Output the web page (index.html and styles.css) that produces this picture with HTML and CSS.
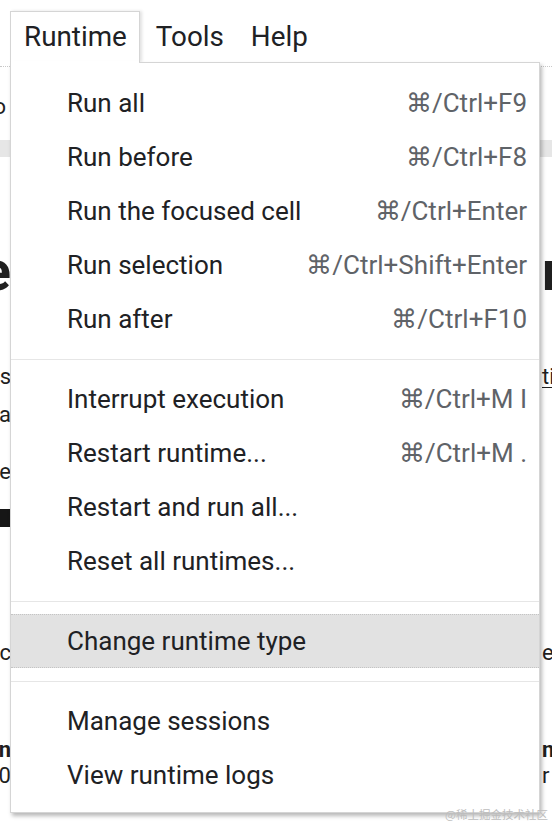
FILE: index.html
```html
<!DOCTYPE html>
<html lang="en">
<head>
<meta charset="utf-8">
<title>Runtime menu</title>
<link rel="stylesheet" href="styles.css">
</head>
<body>
<div class="screen">
  <header class="menubar">
    <div class="menu-item active">Runtime
      <div class="dropdown">
        <div class="entry"><span class="label">Run all</span><span class="key">⌘/Ctrl+F9</span></div>
        <div class="entry"><span class="label">Run before</span><span class="key">⌘/Ctrl+F8</span></div>
        <div class="entry"><span class="label">Run the focused cell</span><span class="key">⌘/Ctrl+Enter</span></div>
        <div class="entry"><span class="label">Run selection</span><span class="key">⌘/Ctrl+Shift+Enter</span></div>
        <div class="entry"><span class="label">Run after</span><span class="key">⌘/Ctrl+F10</span></div>
        <div class="sep"></div>
        <div class="entry"><span class="label">Interrupt execution</span><span class="key">⌘/Ctrl+M I</span></div>
        <div class="entry"><span class="label">Restart runtime...</span><span class="key">⌘/Ctrl+M .</span></div>
        <div class="entry"><span class="label">Restart and run all...</span></div>
        <div class="entry"><span class="label">Reset all runtimes...</span></div>
        <div class="sep"></div>
        <div class="entry hover"><span class="label">Change runtime type</span></div>
        <div class="sep"></div>
        <div class="entry"><span class="label">Manage sessions</span></div>
        <div class="entry"><span class="label">View runtime logs</span></div>
      </div>
    </div>
    <div class="menu-item">Tools</div>
    <div class="menu-item">Help</div>
  </header>

  <main class="page">
    <div class="toolbar">
      <span class="frag-left narrow">Co</span>
    </div>
    <div class="band"></div>
    <div class="bg-row heading">
      <span class="frag-left">Title</span><span class="frag-right">n</span>
    </div>
    <div class="bg-row text first">
      <span class="frag-left">This</span><span class="frag-right"><u>tion</u></span>
    </div>
    <div class="bg-row text">
      <span class="frag-left">data</span><span class="frag-right"></span>
    </div>
    <div class="bg-row text gap-s">
      <span class="frag-left">mode</span><span class="frag-right"></span>
    </div>
    <div class="block"></div>
    <div class="bg-row text gap-l">
      <span class="frag-left">Use sc</span><span class="frag-right">es</span>
    </div>
    <div class="bg-row tight bold gap-m">
      <span class="frag-left">Run</span><span class="frag-right">ns</span>
    </div>
    <div class="bg-row tight">
      <span class="frag-left">1000</span><span class="frag-right">r</span>
    </div>
  </main>

  <div class="watermark">@稀土掘金技术社区</div>
</div>
</body>
</html>
```

FILE: styles.css
```css
* { box-sizing: border-box; }

html, body {
  margin: 0;
  padding: 0;
  background: #ffffff;
}

body {
  font-family: Roboto, "Noto Sans", "Liberation Sans", sans-serif;
  color: #202124;
  overflow: hidden;
}

.screen {
  position: relative;
  width: 552px;
  height: 828px;
  overflow: hidden;
}

/* ---------- menu bar ---------- */
.menubar {
  display: flex;
  align-items: stretch;
  gap: 2px;
  height: 62px;
  padding: 11px 0 0 10px;
  font-size: 27.8px;
  position: relative;
  z-index: 5;
}

.menu-item {
  display: flex;
  align-items: center;
  padding: 0 10px 0 13px;
  line-height: 1;
  border: 1px solid transparent;
  border-bottom: none;
}

.menu-item.active {
  position: relative;
  padding-right: 12px;
  background: #fff;
  border-color: #d5d5d5;
  box-shadow: 2px 0 3px rgba(0, 0, 0, 0.12);
}

.menu-item.active::after {
  content: "";
  position: absolute;
  left: 0;
  right: 0;
  bottom: -1px;
  height: 2px;
  background: #fff;
  z-index: 3;
}

/* ---------- dropdown ---------- */
.dropdown {
  position: absolute;
  top: 100%;
  left: -1px;
  width: 530px;
  z-index: 2;
  background: #fff;
  border: 1px solid #d5d5d5;
  box-shadow: 2px 3px 4px rgba(0, 0, 0, 0.28);
  padding: 13px 0 10px;
  font-size: 26px;
}

.entry {
  display: flex;
  justify-content: space-between;
  align-items: center;
  height: 54px;
  padding: 0 12px 0 56px;
  white-space: nowrap;
}

.entry .label { color: #202124; }
.entry .key { color: #5f6368; }

.entry.hover {
  background: #e2e2e2;
  border-top: 1px dotted #c4c4c4;
  border-bottom: 1px dotted #c4c4c4;
}

.sep {
  height: 1px;
  background: #e6e6e6;
  margin: 13px 0 12px;
}

/* ---------- page behind the menu ---------- */
.page {
  font-size: 22px;
  color: #1f1f1f;
}

.toolbar {
  margin-top: 4px;
  height: 74px;
  border-top: 1px dotted #c8c8c8;
  display: flex;
  align-items: center;
  padding-top: 6px;
}

.band {
  height: 17px;
  background: #e6e6e6;
}

.bg-row {
  display: flex;
  justify-content: space-between;
  white-space: nowrap;
}

.frag-left {
  width: 11px;
  display: flex;
  justify-content: flex-end;
}

.frag-left.narrow { width: 6px; }

.frag-right {
  width: 10px;
}

.frag-right u {
  text-decoration-thickness: 1px;
  text-underline-offset: 3px;
}

.heading {
  margin-top: 82px;
  font-size: 56px;
  font-weight: 700;
  line-height: 64px;
}

.text {
  line-height: 38px;
}

.text.first { margin-top: 55px; }
.gap-s { margin-top: 19px; }
.gap-l { margin-top: 107px; }
.gap-m { margin-top: 65px; }

.tight { line-height: 26px; }
.bold { font-weight: 700; }

.block {
  width: 10px;
  height: 18px;
  background: #161616;
  margin-top: 18px;
}

.watermark {
  position: absolute;
  right: 4px;
  bottom: 6px;
  font-family: "Noto Sans CJK SC", "Noto Sans", sans-serif;
  font-size: 11.5px;
  color: #bdbdbd;
  z-index: 10;
}
```
